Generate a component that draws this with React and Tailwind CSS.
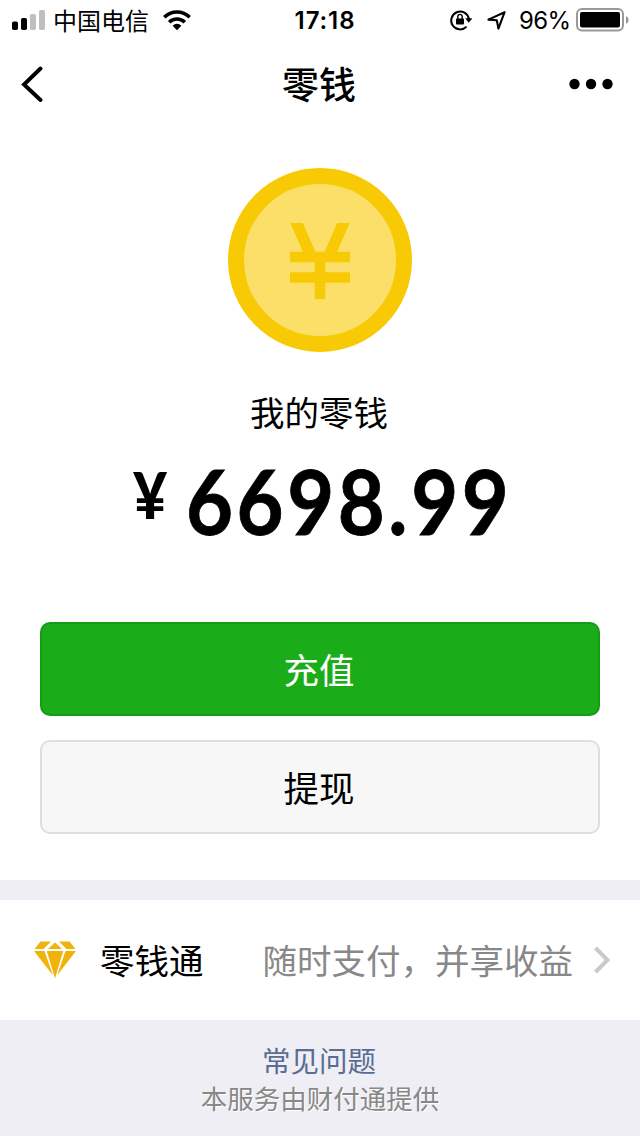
function StatusBar() {
  return (
    <div className="flex h-10 items-center pr-[11px] pl-3">
      <svg width="34" height="20" viewBox="0 0 34 20" className="shrink-0">
        <rect x="0" y="11.5" width="6" height="8.5" rx="1.8" fill="#000" />
        <rect x="9" y="8" width="6" height="12" rx="1.8" fill="#000" />
        <rect x="18" y="4" width="6" height="16" rx="1.8" fill="#bfbfbf" />
        <rect x="27" y="0" width="6" height="20" rx="1.8" fill="#bfbfbf" />
      </svg>
      <span className="ml-[7px] text-[24px] leading-10">中国电信</span>
      <svg width="28" height="21" viewBox="0 0 28 21" className="ml-[14px] shrink-0">
        <g fill="none" stroke="#000" strokeWidth="3.6">
          <path d="M1.3 7.2a18 18 0 0 1 25.4 0" />
          <path d="M6.2 12.2a11 11 0 0 1 15.6 0" />
        </g>
        <path d="M14 20.3l-4.4-4.6a6.2 6.2 0 0 1 8.8 0z" />
      </svg>
      <span className="mt-[2px] ml-[103px] w-[62px] text-center font-['Inter'] text-[24px] leading-10 font-semibold tracking-[0.9px] whitespace-nowrap">
        17:18
      </span>
      <svg width="24" height="22" viewBox="0 0 24 22" className="ml-auto shrink-0">
        <path d="M16.6 17.6A8.9 8.9 0 1 1 18.9 10" fill="none" stroke="#000" strokeWidth="2" />
        <path d="M15.2 9.2h7.2l-3.6 4.6z" />
        <rect x="6" y="9.4" width="8" height="6.2" rx="0.8" />
        <path d="M7.8 10V7.6a2.2 2.2 0 0 1 4.4 0V10" fill="none" stroke="#000" strokeWidth="1.4" />
      </svg>
      <svg width="20" height="20" viewBox="0 0 20 20" className="ml-[13px] shrink-0">
        <path
          d="M1.4 9.6L17.6 2.2L11.4 18.6L9.8 10.2z"
          fill="none"
          stroke="#000"
          strokeWidth="2.1"
          strokeLinejoin="round"
        />
      </svg>
      <span className="mt-[2px] ml-3 w-[51px] font-['Inter'] text-[24px] leading-10 tracking-[-0.6px] whitespace-nowrap">
        96%
      </span>
      <svg width="53" height="24" viewBox="0 0 53 24" className="ml-[6px] shrink-0">
        <rect x="1" y="1" width="46" height="21.5" rx="5" fill="none" stroke="#999" strokeWidth="2" />
        <rect x="4" y="4" width="40" height="15.5" rx="2" />
        <path d="M50 8c3.4 1.4 3.4 6.4 0 7.8z" fill="#999" />
      </svg>
    </div>
  )
}

function NavBar() {
  return (
    <header className="grid h-22 grid-cols-3 items-center px-5">
      <svg width="24" height="36" viewBox="0 0 24 36">
        <path d="M20.5 2.5L4 18.5l16.500 15.500" fill="none" stroke="#000" strokeWidth="3.9" strokeLinecap="round" />
      </svg>
      <h1 className="-mt-[3px] -ml-[2px] text-center text-[37px] leading-[88px] font-medium">零钱</h1>
      <svg width="44" height="12" viewBox="0 0 44 12" className="mr-[7px] justify-self-end">
        <circle cx="5.500" cy="6" r="5.2" />
        <circle cx="22" cy="6" r="5.2" />
        <circle cx="38.500" cy="6" r="5.2" />
      </svg>
    </header>
  )
}

function Coin() {
  return (
    <div className="mt-10 flex size-[184px] items-center justify-center rounded-full border-16 border-[#f8ca05] bg-[#fbdf69]">
      <svg width="60" height="76" viewBox="0 0 60 76" className="mt-px">
        <g fill="none" stroke="#f8ca05" strokeWidth="10.500">
          <path d="M3.900 -6L20.600 32M56.100 -6L39.400 32" strokeWidth="11.500" />
          <path d="M0 33.900h60M0 54.500h60M30 29v47" />
        </g>
      </svg>
    </div>
  )
}

function DiamondIcon() {
  return (
    <svg width="42" height="38" viewBox="0 0 42 38" className="shrink-0">
      <g fill="#efb30c">
        <path d="M6.500 0.500H17L9.500 8H0.500z" />
        <path d="M21 1.500L28 8H14z" />
        <path d="M25 0.500h10.500l6 7.500h-9z" />
        <path d="M0 10h10.500L19 34.500z" />
        <path d="M12.800 10h16.400L21 37.500z" />
        <path d="M31.500 10H42L23 34.500z" />
      </g>
    </svg>
  )
}

export default function App() {
  return (
    <div className="flex h-[1136px] w-[640px] flex-col overflow-hidden bg-white font-['Noto_Sans_CJK_SC',sans-serif] text-black">
      <StatusBar />
      <NavBar />

      <main className="flex h-[752px] shrink-0 flex-col items-center px-10">
        <Coin />
        <p className="mt-[34px] -ml-[2px] text-[34.5px] leading-[50px]">我的零钱</p>
        <div className="mt-[18px] flex h-[98px] w-[380px] shrink-0 items-start font-['Lato'] font-bold">
          <span className="mt-[9px] ml-[3px] origin-left scale-x-[0.92] text-[64px] leading-[64px] font-black">¥</span>
          <span className="-mt-[3px] ml-[16px] origin-left scale-x-[0.9] text-[90px] leading-[98px] tracking-[4px] whitespace-nowrap [-webkit-text-stroke:0.8px_#000]">
            6698.99
          </span>
        </div>
        <button
          type="button"
          className="mt-[70px] h-[94px] w-full shrink-0 rounded-[10px] border-2 border-[#179b16] bg-[#1aad19] pr-[2px] text-[35.5px] leading-[88px] text-white"
        >
          充值
        </button>
        <button
          type="button"
          className="mt-6 h-[94px] w-full shrink-0 rounded-[10px] border-2 border-[#dedede] bg-[#f7f7f7] pr-[2px] text-[35.5px] leading-[88px]"
        >
          提现
        </button>
      </main>

      <div className="h-5 shrink-0 bg-[#efeef4]" />

      <section className="flex h-30 shrink-0 items-center pr-[30px] pl-[34px]">
        <DiamondIcon />
        <span className="-mt-[3px] ml-6 text-[34.500px] leading-[50px]">零钱通</span>
        <span className="-mt-[3px] ml-auto text-[34.500px] leading-[50px] text-[#888]">随时支付，并享收益</span>
        <svg width="17" height="28" viewBox="0 0 17 28" className="ml-5">
          <path d="M2.500 2l12 12l-12 12" fill="none" stroke="#c8c8cd" strokeWidth="4" />
        </svg>
      </section>

      <footer className="flex flex-1 flex-col items-center bg-[#efeef4] pt-5">
        <a href="#faq" className="-ml-[2px] text-[28.500px] leading-10 text-[#586c94]">
          常见问题
        </a>
        <p className="text-[26.500px] leading-9 text-[#888] [text-shadow:1px_1px_0_#fff]">本服务由财付通提供</p>
      </footer>
    </div>
  )
}
